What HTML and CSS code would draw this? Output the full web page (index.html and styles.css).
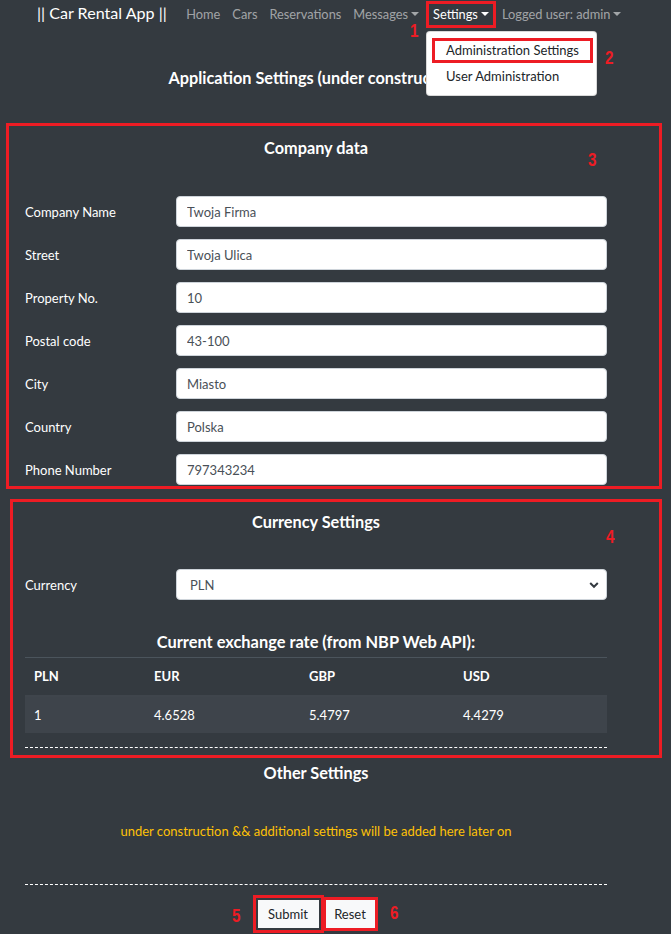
FILE: index.html
```html
<!DOCTYPE html>
<html lang="en">
<head>
<meta charset="utf-8">
<title>Car Rental App - Settings</title>
<link rel="stylesheet" href="styles.css">
</head>
<body>
<nav class="navbar">
  <a class="brand" href="#">|| Car Rental App ||</a>
  <ul class="nav">
    <li class="nav-item"><a class="nav-link" href="#">Home</a></li>
    <li class="nav-item"><a class="nav-link" href="#">Cars</a></li>
    <li class="nav-item"><a class="nav-link" href="#">Reservations</a></li>
    <li class="nav-item"><a class="nav-link toggle" href="#">Messages</a></li>
    <li class="nav-item open">
      <a class="nav-link toggle active marked" href="#">Settings</a>
      <span class="note note-1">1</span>
      <div class="dropdown">
        <a class="dropdown-item marked" href="#">Administration Settings</a>
        <a class="dropdown-item" href="#">User Administration</a>
        <span class="note note-2">2</span>
      </div>
    </li>
    <li class="nav-item"><a class="nav-link toggle" href="#">Logged user: admin</a></li>
  </ul>
</nav>

<main class="page">
  <h2 class="page-title">Application Settings (under construction)</h2>

  <form class="settings">
    <section class="box box-company">
      <span class="note note-3">3</span>
      <h3 class="box-title">Company data</h3>
      <div class="rows">
        <div class="row"><label>Company Name</label><input class="field" value="Twoja Firma"></div>
        <div class="row"><label>Street</label><input class="field" value="Twoja Ulica"></div>
        <div class="row"><label>Property No.</label><input class="field" value="10"></div>
        <div class="row"><label>Postal code</label><input class="field" value="43-100"></div>
        <div class="row"><label>City</label><input class="field" value="Miasto"></div>
        <div class="row"><label>Country</label><input class="field" value="Polska"></div>
        <div class="row"><label>Phone Number</label><input class="field" value="797343234"></div>
      </div>
    </section>

    <section class="box box-currency">
      <span class="note note-4">4</span>
      <h3 class="box-title">Currency Settings</h3>
      <div class="row">
        <label>Currency</label>
        <div class="select">
          <span>PLN</span>
          <svg width="10" height="8" viewBox="0 0 10 8"><path d="M1.2 2 L5 5.8 L8.8 2" fill="none" stroke="#343a40" stroke-width="2"/></svg>
        </div>
      </div>
      <h3 class="rate-title">Current exchange rate (from NBP Web API):</h3>
      <table class="rates">
        <thead>
          <tr><th>PLN</th><th>EUR</th><th>GBP</th><th>USD</th></tr>
        </thead>
        <tbody>
          <tr><td>1</td><td>4.6528</td><td>5.4797</td><td>4.4279</td></tr>
        </tbody>
      </table>
      <hr class="dash dash-in">
    </section>

    <section class="other">
      <h3 class="other-title">Other Settings</h3>
      <p class="warning">under construction &amp;&amp; additional settings will be added here later on</p>
      <hr class="dash">
      <div class="actions">
        <span class="note note-5">5</span>
        <button type="button" class="btn btn-submit">Submit</button>
        <button type="button" class="btn btn-reset">Reset</button>
        <span class="note note-6">6</span>
      </div>
    </section>
  </form>
</main>
</body>
</html>
```

FILE: styles.css
```css
* { box-sizing: border-box; }

html, body {
  margin: 0;
  padding: 0;
}

body {
  background: #343a40;
  color: #ffffff;
  font-family: Lato, "Open Sans", sans-serif;
  font-size: 13px;
  width: 671px;
  height: 934px;
  overflow: hidden;
}

a { text-decoration: none; }

/* ---------- navbar ---------- */
.navbar {
  display: flex;
  align-items: flex-start;
  height: 28px;
  padding-left: 37px;
}

.brand {
  color: #ffffff;
  font-size: 16.1px;
  line-height: 26px;
  margin-right: 13.5px;
  white-space: nowrap;
}

.nav {
  display: flex;
  list-style: none;
  margin: 0;
  padding: 0;
}

.nav-item {
  position: relative;
}

.nav-item.open {
  margin-left: 1px;
}

.nav-link {
  display: block;
  margin-top: 1px;
  height: 27px;
  line-height: 27px;
  padding: 0 6px;
  font-size: 12.8px;
  color: rgba(255, 255, 255, 0.55);
  white-space: nowrap;
}

.nav-link.marked {
  padding: 0 7px;
}

.nav-link.active { color: #ffffff; }

.toggle::after {
  content: "";
  display: inline-block;
  margin-left: 3px;
  vertical-align: 3px;
  border-top: 4px solid;
  border-left: 4px solid transparent;
  border-right: 4px solid transparent;
}

.marked {
  box-shadow: inset 0 0 0 3px #ed1c24;
}

/* ---------- dropdown ---------- */
.dropdown {
  position: absolute;
  left: 0;
  top: 31px;
  width: 171px;
  padding: 6px 0 6px;
  background: #ffffff;
  border: 1px solid rgba(0, 0, 0, 0.15);
  border-radius: 4px;
  z-index: 5;
}

.dropdown-item {
  display: block;
  height: 25px;
  line-height: 25px;
  padding-left: 19px;
  color: #212529;
  white-space: nowrap;
}

.dropdown-item.marked {
  margin: 0 3px 1px 5px;
  padding-left: 14px;
}

/* ---------- annotations ---------- */
.note {
  position: absolute;
  color: #ed1c24;
  font-family: "Liberation Sans", Arial, sans-serif;
  font-weight: bold;
  font-size: 19px;
  line-height: 20px;
  transform: scaleX(0.8);
}

.note-1 { left: -17px; top: 21px; }
.note-2 { left: 177px; top: 16px; }
.note-3 { left: 578px; top: 24px; }
.note-4 { left: 592px; top: 25px; }
.note-5 { left: -27px; top: 6px; }
.note-6 { right: -25px; top: 3px; }

/* ---------- page ---------- */
.page {
  width: 671px;
}

.page-title {
  margin: 39px 0 0 25px;
  width: 582px;
  text-align: center;
  font-size: 16.3px;
  line-height: 22px;
  font-weight: 700;
}

.settings {
  margin-top: 34px;
}

.box {
  position: relative;
  border: 3px solid #ed1c24;
}

.box-company {
  margin-left: 6px;
  width: 656px;
  padding: 11px 0 1px 16px;
}

.box-currency {
  margin: 10px 0 0 10px;
  width: 652px;
  padding: 9px 0 0 12px;
  height: 259px;
}

.box-title {
  width: 582px;
  margin: 0 0 37px;
  text-align: center;
  font-size: 16.3px;
  line-height: 22px;
  font-weight: 700;
}

.box-currency .box-title { margin-bottom: 36px; }

.rows {
  display: flex;
  flex-direction: column;
  gap: 12px;
  width: 582px;
}

.row {
  display: flex;
  align-items: center;
  width: 582px;
}

.row label {
  width: 151px;
  flex: none;
  color: #ffffff;
}

.field {
  width: 431px;
  height: 31px;
  padding: 0 10px;
  border: 1px solid #ced4da;
  border-radius: 4px;
  background: #ffffff;
  color: #495057;
  font: inherit;
  outline: none;
}

.select {
  display: flex;
  align-items: center;
  justify-content: space-between;
  width: 431px;
  height: 31px;
  padding: 0 7px 0 13px;
  border: 1px solid #ced4da;
  border-radius: 4px;
  background: #ffffff;
  color: #495057;
}

.rate-title {
  width: 582px;
  margin: 30px 0 3px;
  text-align: center;
  font-size: 16.4px;
  line-height: 24px;
  font-weight: 700;
}

.rates {
  width: 582px;
  border-collapse: collapse;
  border-top: 1px solid #4b545c;
  color: #ffffff;
}

.rates th,
.rates td {
  text-align: left;
  padding: 0 9px;
}

.rates th {
  height: 38px;
  font-weight: 700;
  border-bottom: 2px solid #3f454c;
}

.rates td {
  height: 37px;
  background: #3e444b;
}

.rates th:nth-child(1) { width: 120px; }
.rates th:nth-child(2) { width: 155px; }
.rates th:nth-child(3) { width: 154px; }

.dash {
  width: 582px;
  height: 0;
  margin: 0;
  border: 0;
  border-top: 1px dashed #ffffff;
}

.dash-in { margin-top: 14px; }

.other {
  padding-left: 25px;
  width: 607px;
}

.other-title {
  margin: 4px 0 0;
  text-align: center;
  font-size: 16.3px;
  line-height: 22px;
  font-weight: 700;
}

.warning {
  margin: 37px 0 43px;
  text-align: center;
  color: #ffc107;
  line-height: 20px;
}

.actions {
  position: relative;
  display: flex;
  justify-content: center;
  gap: 7px;
  margin: 15px auto 0;
  width: 117px;
}

.btn {
  height: 28px;
  padding: 0;
  border: 0;
  background: #f8f9fa;
  color: #212529;
  font: inherit;
}

.btn-submit {
  width: 61px;
  outline: 3px solid #ed1c24;
  outline-offset: 2px;
}

.btn-reset {
  width: 49px;
  outline: 3px solid #ed1c24;
  outline-offset: 0;
}
```
